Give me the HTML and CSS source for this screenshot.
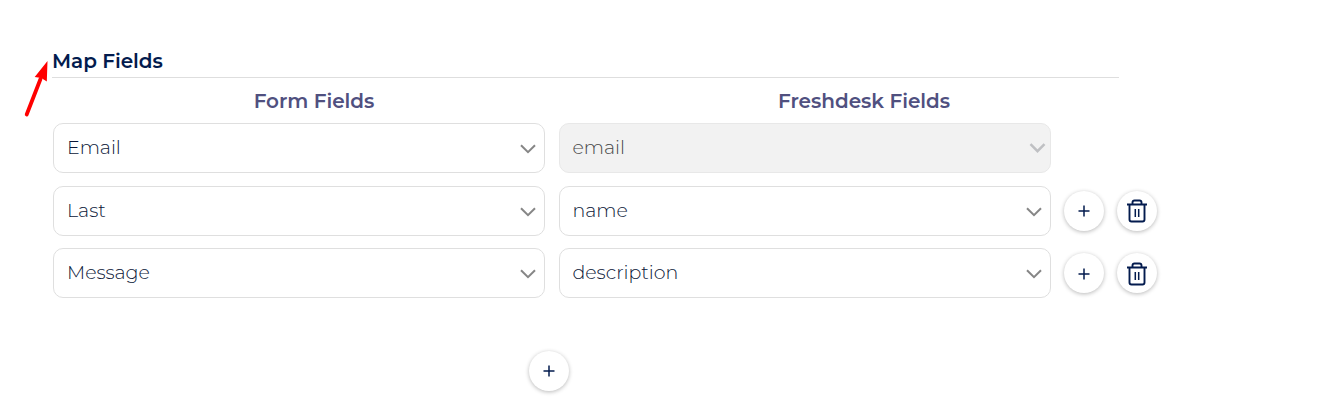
FILE: index.html
```html
<!DOCTYPE html>
<html lang="en">
<head>
<meta charset="utf-8">
<title>Map Fields</title>
<link rel="stylesheet" href="styles.css">
</head>
<body>
<svg class="arrow" viewBox="0 0 30 64" width="30" height="64"><path d="M6.7 56.5L20.500 21" stroke="#f00" stroke-width="3.800" stroke-linecap="round"/><path d="M27.5 3L26.8 23.5L21.3 20L14.7 19Z" fill="#f00"/></svg>
<main class="mapping">
  <h1 class="title">Map Fields</h1>
  <div class="row head">
    <h2>Form Fields</h2>
    <h2 class="head-right">Freshdesk Fields</h2>
  </div>
  <div class="row first">
    <div class="field"><span>Email</span><svg class="chevron" viewBox="0 0 16 10"><path d="M1 1.2L8 8.2L15 1.2"/></svg></div>
    <div class="field disabled"><span>email</span><svg class="chevron" viewBox="0 0 16 10"><path d="M1 1.2L8 8.2L15 1.2"/></svg></div>
  </div>
  <div class="row">
    <div class="field"><span>Last</span><svg class="chevron" viewBox="0 0 16 10"><path d="M1 1.2L8 8.2L15 1.2"/></svg></div>
    <div class="field"><span>name</span><svg class="chevron" viewBox="0 0 16 10"><path d="M1 1.2L8 8.2L15 1.2"/></svg></div>
    <div class="actions">
      <button class="round" aria-label="Add"><svg class="plus" viewBox="0 0 12 12"><path d="M.5 6H11.5M6 .5V11.5"/></svg></button>
      <button class="round" aria-label="Delete"><svg class="trash" viewBox="0 0 22 24"><path d="M1 5.5H21M3.5 5.5V20.5Q3.5 22.5 5.5 22.5H16.5Q18.5 22.5 18.5 20.5V5.5M6.5 5V3.5Q6.5 1.5 8.5 1.5H13.5Q15.5 1.5 15.5 3.5V5"/><path class="slots" d="M9.3 10V18M12.7 10V18"/></svg></button>
    </div>
  </div>
  <div class="row third">
    <div class="field"><span>Message</span><svg class="chevron" viewBox="0 0 16 10"><path d="M1 1.2L8 8.2L15 1.2"/></svg></div>
    <div class="field"><span>description</span><svg class="chevron" viewBox="0 0 16 10"><path d="M1 1.2L8 8.2L15 1.2"/></svg></div>
    <div class="actions">
      <button class="round" aria-label="Add"><svg class="plus" viewBox="0 0 12 12"><path d="M.5 6H11.5M6 .5V11.5"/></svg></button>
      <button class="round" aria-label="Delete"><svg class="trash" viewBox="0 0 22 24"><path d="M1 5.5H21M3.5 5.5V20.5Q3.5 22.5 5.5 22.5H16.5Q18.5 22.5 18.5 20.5V5.5M6.5 5V3.5Q6.5 1.5 8.5 1.5H13.5Q15.5 1.5 15.5 3.5V5"/><path class="slots" d="M9.3 10V18M12.7 10V18"/></svg></button>
    </div>
  </div>
  <div class="footer">
    <button class="round" aria-label="Add field"><svg class="plus" viewBox="0 0 12 12"><path d="M.5 6H11.5M6 .5V11.5"/></svg></button>
  </div>
</main>
</body>
</html>
```
FILE: styles.css
```css
* { box-sizing: border-box; }
body {
  margin: 0;
  background: #fff;
  color: #031b4e;
  font-family: Montserrat, Inter, sans-serif;
}
.arrow { position: absolute; left: 20px; top: 58px; }
.mapping { min-height: 413px; padding: 46px 0 0 53px; }
.title {
  width: 1067px;
  height: 32px;
  margin: 0 0 0 -1px;
  border-bottom: 1px solid #dedede;
  font-size: 20px;
  font-weight: 600;
  letter-spacing: -.05px;
  line-height: 30px;
}
.row {
  display: grid;
  grid-template-columns: 492px 492px auto;
  column-gap: 14px;
  justify-content: start;
  margin-bottom: 12px;
}
.head { height: 45px; margin: 0; }
.head h2 {
  margin: 0;
  padding-left: 30px;
  color: #50507f;
  font-size: 20px;
  font-weight: 600;
  letter-spacing: -.03px;
  line-height: 46px;
  text-align: center;
}
.head .head-right { padding-left: 118px; }
.first { margin-bottom: 13px; }
.field {
  display: flex;
  align-items: center;
  justify-content: space-between;
  height: 50px;
  padding: 0 8px 2px 13px;
  border: 1px solid #dfdfdf;
  border-radius: 10px;
  color: #0b1738;
  font-size: 19px;
  font-weight: 300;
  line-height: 24px;
}
.field span { margin-top: 2px; letter-spacing: -.03px; }
.field + .field span { margin-left: -.5px; }
.disabled {
  padding-right: 4px;
  background: #f2f2f2;
  border-color: #e8e8e8;
  color: #484848;
}
.chevron {
  width: 16px;
  height: 10px;
  margin-top: 3px;
  fill: none;
  stroke: #868686;
  stroke-width: 2;
}
.disabled .chevron { margin-top: 2px; width: 17px; stroke: #bfc0c3; stroke-width: 2.5; }
.actions { display: flex; align-items: center; gap: 13px; margin-left: -1px; }
.round {
  display: grid;
  place-items: center;
  width: 40px;
  height: 40px;
  padding: 0;
  border: 0;
  border-radius: 50%;
  background: #fff;
  box-shadow: 0 1px 4px rgba(0, 0, 0, .28);
}
.plus { width: 12px; height: 12px; fill: none; stroke: #031b4e; stroke-width: 1.5; }
.trash { width: 22px; height: 24px; fill: none; stroke: #031b4e; stroke-width: 1.9; stroke-linejoin: round; }
.slots { stroke-width: 1.5; }
.third .plus, .third .trash { margin-top: 1px; }
.footer { display: flex; padding: 41px 0 0 476px; }
```
